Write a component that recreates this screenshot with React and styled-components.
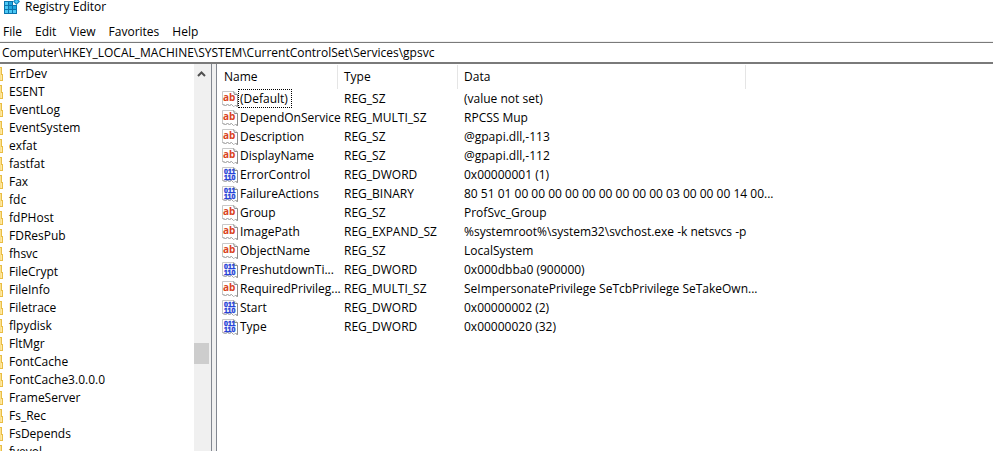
import React from "react"
import styled, { createGlobalStyle } from "styled-components"

const GlobalStyle = createGlobalStyle`
  * {
    box-sizing: border-box;
  }
  body {
    margin: 0;
    background: #fff;
    color: #000;
    font: 12px/18px "Open Sans", "Noto Sans", sans-serif;
  }
  button,
  input {
    font: inherit;
    color: inherit;
  }
`

const Window = styled.div`
  display: flex;
  flex-direction: column;
  height: 100vh;
  overflow: hidden;
`

const TitleBar = styled.header`
  display: flex;
  align-items: center;
  gap: 5px;
  height: 22px;
  padding: 0 4px 8px;

  h1 {
    margin: 0;
    font-size: 12px;
    font-weight: 400;
    line-height: 14px;
  }
`

const MenuBar = styled.nav`
  display: flex;
  gap: 13px;
  height: 20px;
  padding: 0 3px;
  border-bottom: 1px solid #f0f0f0;
`

const MenuButton = styled.button`
  padding: 0;
  border: 0;
  background: none;
  line-height: 19px;
`

const AddressBar = styled.input`
  width: 100%;
  height: 22px;
  padding: 0 2px;
  border: solid #7a7a7a;
  border-width: 1px 0 2px;
  border-radius: 0;
  outline: none;
  background: #fff;
`

const Panes = styled.main`
  display: flex;
  flex: 1;
  gap: 4px;
  min-height: 0;
  background: #f0f0f0;
`

const TreePane = styled.section`
  display: flex;
  width: 212px;
  border-right: 1px solid #828790;
  background: #fff;
`

const Tree = styled.ul`
  flex: 1;
  margin: 0;
  padding: 1px 0 0;
  overflow: hidden;
  list-style: none;
`

const TreeItem = styled.li`
  display: flex;
  align-items: center;
  gap: 6px;
  height: 18px;
  white-space: nowrap;
`

const ScrollBar = styled.div`
  display: flex;
  flex-direction: column;
  width: 17px;
  padding: 1px 2px 0 0;
  background: #f0f0f0;
`

const ScrollButton = styled.button`
  display: flex;
  justify-content: center;
  align-items: center;
  width: 15px;
  height: 17px;
  padding: 0;
  border: 0;
  background: none;
`

const ScrollSpace = styled.div`
  flex: ${({ $share }) => $share};
`

const ScrollThumb = styled.div`
  height: 21px;
  background: #cdcdcd;
`

const ListPane = styled.section`
  flex: 1;
  min-width: 0;
  overflow: hidden;
  border-left: 1px solid #828790;
  background: #fff;
`

const ValueTable = styled.table`
  width: 529px;
  margin-top: 1px;
  border-collapse: separate;
  border-spacing: 0;
  table-layout: fixed;
`

const Column = styled.col`
  width: ${({ $width }) => $width}px;
`

const HeaderCell = styled.th`
  height: 24px;
  padding: 0 6px;
  border-right: 1px solid #e5e5e5;
  font-weight: 400;
  text-align: left;

  &:first-child {
    padding-left: 7px;
  }
`

const Cell = styled.td`
  height: 19px;
  padding: 0 0 0 6px;
  white-space: nowrap;
`

const NameCell = styled(Cell)`
  padding-left: 5px;

  > div {
    display: flex;
    align-items: center;
  }
`

const Name = styled.span`
  height: 19px;
  padding: 0 ${({ $focused }) => ($focused ? 3 : 0)}px 0 1px;
  border: 1px ${({ $focused }) => ($focused ? "dotted #000" : "solid transparent")};
  line-height: 17px;
`

const Icon = styled.svg`
  display: block;
  flex: none;
`

const RegistryIcon = () => (
  <Icon width="16" height="14" viewBox="0 0 16 14" aria-hidden="true">
    <path d="M0 1h9v4h4v9H0z" fill="#0b74ad" />
    <path d="M1 2h3v3H1zM1 6h3v3H1zM1 10h3v3H1zM5 10h3v3H5zM9 10h3v3H9z" fill="#4cc8f4" />
    <path d="M5 2h3v3H5zM5 6h3v3H5zM9 6h3v3H9z" fill="#22a7e0" />
    <path d="M12.500-2l3.500 3.500-3.500 3.500L9 1.500z" fill="#1482bd" />
    <path d="M12.500-.5l2 2-2 2-2-2z" fill="#4cc8f4" />
  </Icon>
)

const FolderEdge = () => (
  <Icon width="3" height="18" viewBox="0 0 3 18" aria-hidden="true">
    <path d="M0 2h2v7h1v7H0z" fill="#e9bd45" />
    <path d="M0 3h1v12H0z" fill="#fbe08c" />
    <path d="M1 10h1v5H1z" fill="#ffe9a6" />
  </Icon>
)

const PageShape = () => (
  <>
    <path
      d="M.5 .5h11l4 3v12l-2-1-2 1-2-2-2 1-2-1-2 1-3-1z"
      fill="#fff"
      stroke="#c8c8c8"
    />
    <path d="M11.500 .5l1 3h3v12l-2-1" fill="none" stroke="#8e8e8e" />
    <path d="M.5 13.500l3 1 2-1 2 1 2-1 2 2" fill="none" stroke="#a6a6a6" />
  </>
)

const StringIcon = () => (
  <Icon width="16" height="16" viewBox="0 0 16 16" aria-hidden="true">
    <PageShape />
    <text x="1" y="10" fill="#d9431e" fontFamily="Open Sans" fontSize="10" fontWeight="700">
      ab
    </text>
  </Icon>
)

const BinaryIcon = () => (
  <Icon width="16" height="16" viewBox="0 0 16 16" aria-hidden="true">
    <PageShape />
    <g
      fill="#1f3fd6"
      stroke="#1f3fd6"
      strokeWidth="0.4"
      fontFamily="Liberation Sans"
      fontSize="7"
      fontWeight="700"
    >
      <text x="2" y="7">011</text>
      <text x="2" y="13">110</text>
    </g>
  </Icon>
)

const menus = ["File", "Edit", "View", "Favorites", "Help"]

const services = [
  "ErrDev",
  "ESENT",
  "EventLog",
  "EventSystem",
  "exfat",
  "fastfat",
  "Fax",
  "fdc",
  "fdPHost",
  "FDResPub",
  "fhsvc",
  "FileCrypt",
  "FileInfo",
  "Filetrace",
  "flpydisk",
  "FltMgr",
  "FontCache",
  "FontCache3.0.0.0",
  "FrameServer",
  "Fs_Rec",
  "FsDepends",
  "fvevol",
]

const values = [
  ["(Default)", "REG_SZ", "(value not set)"],
  ["DependOnService", "REG_MULTI_SZ", "RPCSS Mup"],
  ["Description", "REG_SZ", "@gpapi.dll,-113"],
  ["DisplayName", "REG_SZ", "@gpapi.dll,-112"],
  ["ErrorControl", "REG_DWORD", "0x00000001 (1)"],
  ["FailureActions", "REG_BINARY", "80 51 01 00 00 00 00 00 00 00 00 00 03 00 00 00 14 00..."],
  ["Group", "REG_SZ", "ProfSvc_Group"],
  ["ImagePath", "REG_EXPAND_SZ", "%systemroot%\\system32\\svchost.exe -k netsvcs -p"],
  ["ObjectName", "REG_SZ", "LocalSystem"],
  ["PreshutdownTi...", "REG_DWORD", "0x000dbba0 (900000)"],
  ["RequiredPrivileg...", "REG_MULTI_SZ", "SeImpersonatePrivilege SeTcbPrivilege SeTakeOwn..."],
  ["Start", "REG_DWORD", "0x00000002 (2)"],
  ["Type", "REG_DWORD", "0x00000020 (32)"],
]

const App = () => (
  <Window>
    <GlobalStyle />
    <TitleBar>
      <RegistryIcon />
      <h1>Registry Editor</h1>
    </TitleBar>
    <MenuBar>
      {menus.map(menu => (
        <MenuButton key={menu}>{menu}</MenuButton>
      ))}
    </MenuBar>
    <AddressBar
      aria-label="Address"
      defaultValue={"Computer\\HKEY_LOCAL_MACHINE\\SYSTEM\\CurrentControlSet\\Services\\gpsvc"}
    />
    <Panes>
      <TreePane>
        <Tree>
          {services.map(service => (
            <TreeItem key={service}>
              <FolderEdge />
              {service}
            </TreeItem>
          ))}
        </Tree>
        <ScrollBar>
          <ScrollButton aria-label="Scroll up">
            <Icon width="9" height="6" viewBox="0 0 9 6">
              <path d="M1 5l3.500-3.500L8 5" fill="none" stroke="#505050" strokeWidth="2" />
            </Icon>
          </ScrollButton>
          <ScrollSpace $share={3} />
          <ScrollThumb />
          <ScrollSpace $share={1} />
        </ScrollBar>
      </TreePane>
      <ListPane>
        <ValueTable>
          <colgroup>
            <Column $width={121} />
            <Column $width={120} />
            <Column $width={288} />
          </colgroup>
          <thead>
            <tr>
              <HeaderCell>Name</HeaderCell>
              <HeaderCell>Type</HeaderCell>
              <HeaderCell>Data</HeaderCell>
            </tr>
          </thead>
          <tbody>
            {values.map(([name, type, data], i) => (
              <tr key={name}>
                <NameCell>
                  <div>
                    {/REG_(DWORD|BINARY)/.test(type) ? <BinaryIcon /> : <StringIcon />}
                    <Name $focused={i === 0}>{name}</Name>
                  </div>
                </NameCell>
                <Cell>{type}</Cell>
                <Cell>{data}</Cell>
              </tr>
            ))}
          </tbody>
        </ValueTable>
      </ListPane>
    </Panes>
  </Window>
)

export default App
